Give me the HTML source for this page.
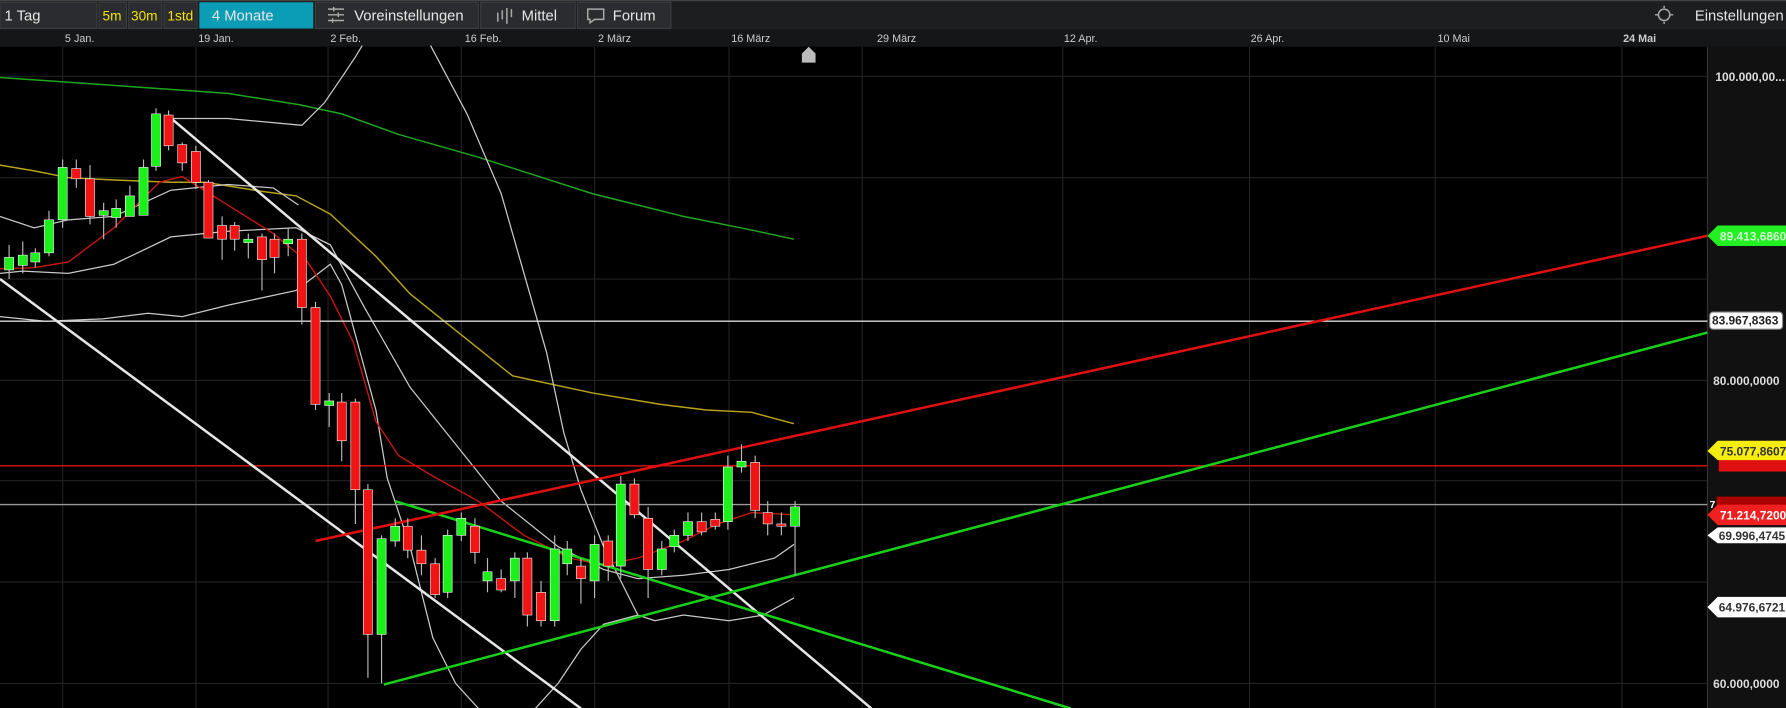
<!DOCTYPE html>
<html><head><meta charset="utf-8"><style>
html,body{margin:0;padding:0;background:#000;width:1786px;height:708px;overflow:hidden}
svg{display:block}
text{font-family:"Liberation Sans",sans-serif}
</style></head><body>
<svg width="1786" height="708" viewBox="0 0 1568 621.6" preserveAspectRatio="none">
<rect width="1568" height="622" fill="#000"/>
<!-- toolbar -->
<rect x="0" y="0" width="1568" height="26" fill="#1c1e20"/>
<rect x="0" y="0" width="1568" height="1" fill="#444"/>
<g fill="#2a2c2f" stroke="#3a3c3f" stroke-width="1">
<rect x="0" y="2" width="85" height="23"/><rect x="87" y="2" width="24" height="23"/><rect x="113" y="2" width="29" height="23"/><rect x="144" y="2" width="29" height="23"/>
<rect x="277" y="2" width="143" height="23"/><rect x="422" y="2" width="83" height="23"/><rect x="507" y="2" width="82" height="23"/>
</g>
<rect x="175" y="2" width="100" height="23" fill="#0c9db6"/>
<g font-size="13" fill="#e6e6e6">
<text x="4" y="18">1 Tag</text>
<text x="90" y="18" fill="#f5e400" font-size="12">5m</text>
<text x="115" y="18" fill="#f5e400" font-size="12">30m</text>
<text x="147" y="18" fill="#f5e400" font-size="12">1std</text>
<text x="186" y="18">4 Monate</text>
<text x="311" y="18">Voreinstellungen</text>
<text x="458" y="18">Mittel</text>
<text x="538" y="18">Forum</text>
<text x="1488" y="18">Einstellungen</text>
</g>
<g stroke="#aaa" stroke-width="1.3" fill="none">
<path d="M288 8h14M288 13h14M288 18h14M293 6v4M297 11v4M292 16v4"/>
<path d="M437 19v-8M441 17v-8M445 21v-14M449 15v-7"/>
<path d="M516 8h14v9h-8l-4 3v-3h-2z"/>
<circle cx="1461" cy="13" r="5"/><path d="M1453 13h3M1466 13h3M1461 5v2M1461 19v2"/>
</g>
<!-- date axis -->
<rect x="0" y="26" width="1568" height="15" fill="#151617"/>
<g font-size="9.5" fill="#ccc">
<text x="57" y="37">5 Jan.</text><text x="174" y="37">19 Jan.</text><text x="290" y="37">2 Feb.</text><text x="408" y="37">16 Feb.</text><text x="525" y="37">2 März</text><text x="642" y="37">16 März</text><text x="770" y="37">29 März</text><text x="934" y="37">12 Apr.</text><text x="1098" y="37">26 Apr.</text><text x="1262" y="37">10 Mai</text><text x="1425" y="37" font-weight="bold">24 Mai</text>
</g>
<path d="M704 55v-8l6-6 6 6v8z" fill="#bbb"/>
<!-- grid -->
<g stroke="#222" stroke-width="1">
<path d="M55 41v581M172 41v581M288 41v581M405 41v581M522 41v581M640 41v581M757 41v581M933 41v581M1097 41v581M1260 41v581M1424 41v581"/>
<path d="M0 67h1499M0 156h1499M0 245h1499M0 334h1499M0 422h1499M0 511h1499M0 600h1499"/>
</g>
<!-- axis panel -->
<rect x="1499" y="41" width="69" height="581" fill="#111"/>
<path d="M1499 41v581" stroke="#333"/>
<!-- MAs -->
<polyline fill="none" stroke="#1fa51f" stroke-width="1.3" points="0,68 100,75 200,82 263,92 300,100 350,118 420,138 520,170 600,190 660,202 697,210"/>
<polyline fill="none" stroke="#b8a21a" stroke-width="1.3" points="0,145 30,150 60,156 100,158 150,160 180,160 230,168 260,172 290,188 330,225 360,258 400,290 450,330 520,345 580,355 620,360 660,362 697,372"/>
<polyline fill="none" stroke="#c8c8c8" stroke-width="1.1" points="0,190 30,200 60,193 100,190 150,167 200,162 240,165 262,180"/>
<polyline fill="none" stroke="#c8c8c8" stroke-width="1.1" points="150,104 200,104 265,110 285,90 300,68 312,50 318,40"/>
<polyline fill="none" stroke="#c8c8c8" stroke-width="1.1" points="0,240 20,238 60,240 100,232 150,208 200,203 260,200 290,215 320,270 360,340 400,390 440,440 490,480 530,500 560,508 600,505 640,500 680,490 697,478"/>
<polyline fill="none" stroke="#c8c8c8" stroke-width="1.1" points="0,278 40,282 90,280 130,275 160,278 200,268 260,255 290,232 300,250 330,360 340,420 360,480 380,560 400,600 420,622"/>
<polyline fill="none" stroke="#c8c8c8" stroke-width="1.1" points="378,40 410,100 440,170 460,240 480,310 495,380 510,430 530,480 545,510 560,540 575,545 600,540 640,545 670,540 697,525"/>
<polyline fill="none" stroke="#c8c8c8" stroke-width="1.1" points="470,622 490,600 510,570 530,548 560,540"/>
<polyline fill="none" stroke="#c8170f" stroke-width="1.2" points="0,236 30,235 60,230 100,200 140,160 160,155 200,180 240,205 270,230 290,260 310,300 330,370 350,400 380,418 420,440 460,470 500,490 530,496 560,490 600,475 630,460 660,450 697,452"/>
<!-- horizontal lines -->
<path d="M0 282H1499" stroke="#d8d8d8" stroke-width="1.2"/>
<path d="M0 409H1499" stroke="#e01010" stroke-width="1.2"/>
<path d="M0 443H1499" stroke="#9a9a9a" stroke-width="1.2"/>
<!-- trend lines -->
<g stroke-width="2.2" fill="none">
<path d="M148 102L765 622" stroke="#e6e6e6"/>
<path d="M0 245L510 622" stroke="#e6e6e6"/>
<path d="M347 440L940 622" stroke="#19d019"/>
<path d="M337 601L1499 292" stroke="#19d019"/>
<path d="M277 475L1499 207" stroke="#e01010"/>
</g>
<!-- candles -->
<g stroke="#bbb" stroke-width="1">
<path d="M8 215v30M20 212v28M31 218v17M43 185v40M55 140v60M67 140v25M79 145v52M91 178v32M102 175v25M114 163v27M126 140v33M137 95v55M148 97v35M160 125v25M172 128v38M183 158v50M195 190v38M206 195v25M218 205v22M230 205v50M241 205v35M253 200v25M265 205v80M277 265v95M289 345v30M300 345v60M312 350v110M323 425v170M335 470v130M347 455v25M358 455v35M370 470v35M382 490v35M393 465v60M405 450v25M417 455v40M428 490v30M440 500v20M452 485v40M463 485v65M475 510v40M487 470v80M498 475v30M510 490v40M522 470v55M534 470v40M545 418v90M557 420v35M569 445v80M581 475v30M592 465v20M604 450v25M616 450v20M628 450v15M639 400v65M651 390v25M663 400v55M674 440v30M686 450v20M698 440v65"/>
</g>
<g fill="#1bf01b" stroke="#fff" stroke-width=".5">
<rect x="4" y="226" width="8" height="11"/><rect x="16" y="224" width="8" height="9"/><rect x="27" y="222" width="8" height="8"/><rect x="39" y="193" width="8" height="29"/><rect x="51" y="147" width="8" height="46"/><rect x="87" y="185" width="8" height="4"/><rect x="98" y="183" width="8" height="8"/><rect x="110" y="172" width="8" height="18"/><rect x="122" y="147" width="8" height="42"/><rect x="133" y="100" width="8" height="46"/><rect x="214" y="210" width="8" height="3"/><rect x="249" y="210" width="8" height="4"/><rect x="285" y="352" width="8" height="4"/><rect x="331" y="473" width="8" height="84"/><rect x="343" y="462" width="8" height="13"/><rect x="389" y="470" width="8" height="50"/><rect x="401" y="455" width="8" height="15"/><rect x="424" y="502" width="8" height="8"/><rect x="448" y="490" width="8" height="20"/><rect x="483" y="482" width="8" height="63"/><rect x="494" y="482" width="8" height="13"/><rect x="518" y="478" width="8" height="32"/><rect x="541" y="425" width="8" height="72"/><rect x="577" y="482" width="8" height="18"/><rect x="588" y="470" width="8" height="10"/><rect x="600" y="458" width="8" height="12"/><rect x="635" y="410" width="8" height="48"/><rect x="647" y="405" width="8" height="5"/><rect x="694" y="445" width="8" height="17"/>
</g>
<g fill="#f01414" stroke="#fff" stroke-width=".5">
<rect x="63" y="148" width="8" height="9"/><rect x="75" y="157" width="8" height="33"/><rect x="144" y="101" width="8" height="27"/><rect x="156" y="127" width="8" height="16"/><rect x="168" y="133" width="8" height="27"/><rect x="179" y="160" width="8" height="49"/><rect x="191" y="198" width="8" height="12"/><rect x="202" y="198" width="8" height="12"/><rect x="226" y="208" width="8" height="20"/><rect x="237" y="210" width="8" height="16"/><rect x="261" y="210" width="8" height="60"/><rect x="273" y="270" width="8" height="85"/><rect x="296" y="353" width="8" height="34"/><rect x="308" y="353" width="8" height="77"/><rect x="319" y="430" width="8" height="127"/><rect x="354" y="462" width="8" height="21"/><rect x="366" y="483" width="8" height="12"/><rect x="378" y="495" width="8" height="27"/><rect x="413" y="462" width="8" height="23"/><rect x="436" y="508" width="8" height="10"/><rect x="459" y="490" width="8" height="50"/><rect x="471" y="520" width="8" height="25"/><rect x="506" y="497" width="8" height="11"/><rect x="530" y="475" width="8" height="22"/><rect x="553" y="425" width="8" height="27"/><rect x="565" y="455" width="8" height="45"/><rect x="612" y="458" width="8" height="9"/><rect x="624" y="456" width="8" height="6"/><rect x="659" y="406" width="8" height="42"/><rect x="670" y="450" width="8" height="10"/><rect x="682" y="460" width="8" height="2"/>
</g>
<!-- axis labels -->
<g font-size="10.5" font-weight="bold">
<text x="1506" y="71" fill="#ddd">100.000,00...</text>
<text x="1504" y="338" fill="#ddd">80.000,0000</text>
<text x="1504" y="604" fill="#ddd">60.000,0000</text>
<path d="M1499 207l9-9h60v18h-60z" fill="#22f022"/><text x="1510" y="211" fill="#d0ffd0">89.413,6860</text>
<rect x="1501" y="274" width="64" height="15" rx="3" fill="#fff" stroke="#888"/><text x="1503" y="285" fill="#222">83.967,8363</text>
<rect x="1509" y="402" width="59" height="12" fill="#e01010"/>
<path d="M1499 396l9-9h60v17h-60z" fill="#f5ec10"/><text x="1510" y="400" fill="#333">75.077,8607</text>
<rect x="1507" y="436" width="61" height="10" fill="#a00"/>
<path d="M1499 452l9-9h60v18h-60z" fill="#f02020"/><text x="1510" y="456" fill="#fff">71.214,7200</text>
<text x="1501" y="446" fill="#fff" font-size="9">7</text>
<path d="M1499 470l9-7h60v14h-60z" fill="#fff"/><text x="1509" y="474" fill="#333">69.996,4745</text>
<path d="M1499 533l9-9h60v18h-60z" fill="#fff"/><text x="1509" y="537" fill="#333">64.976,6721</text>
</g>
</svg>
</body></html>
